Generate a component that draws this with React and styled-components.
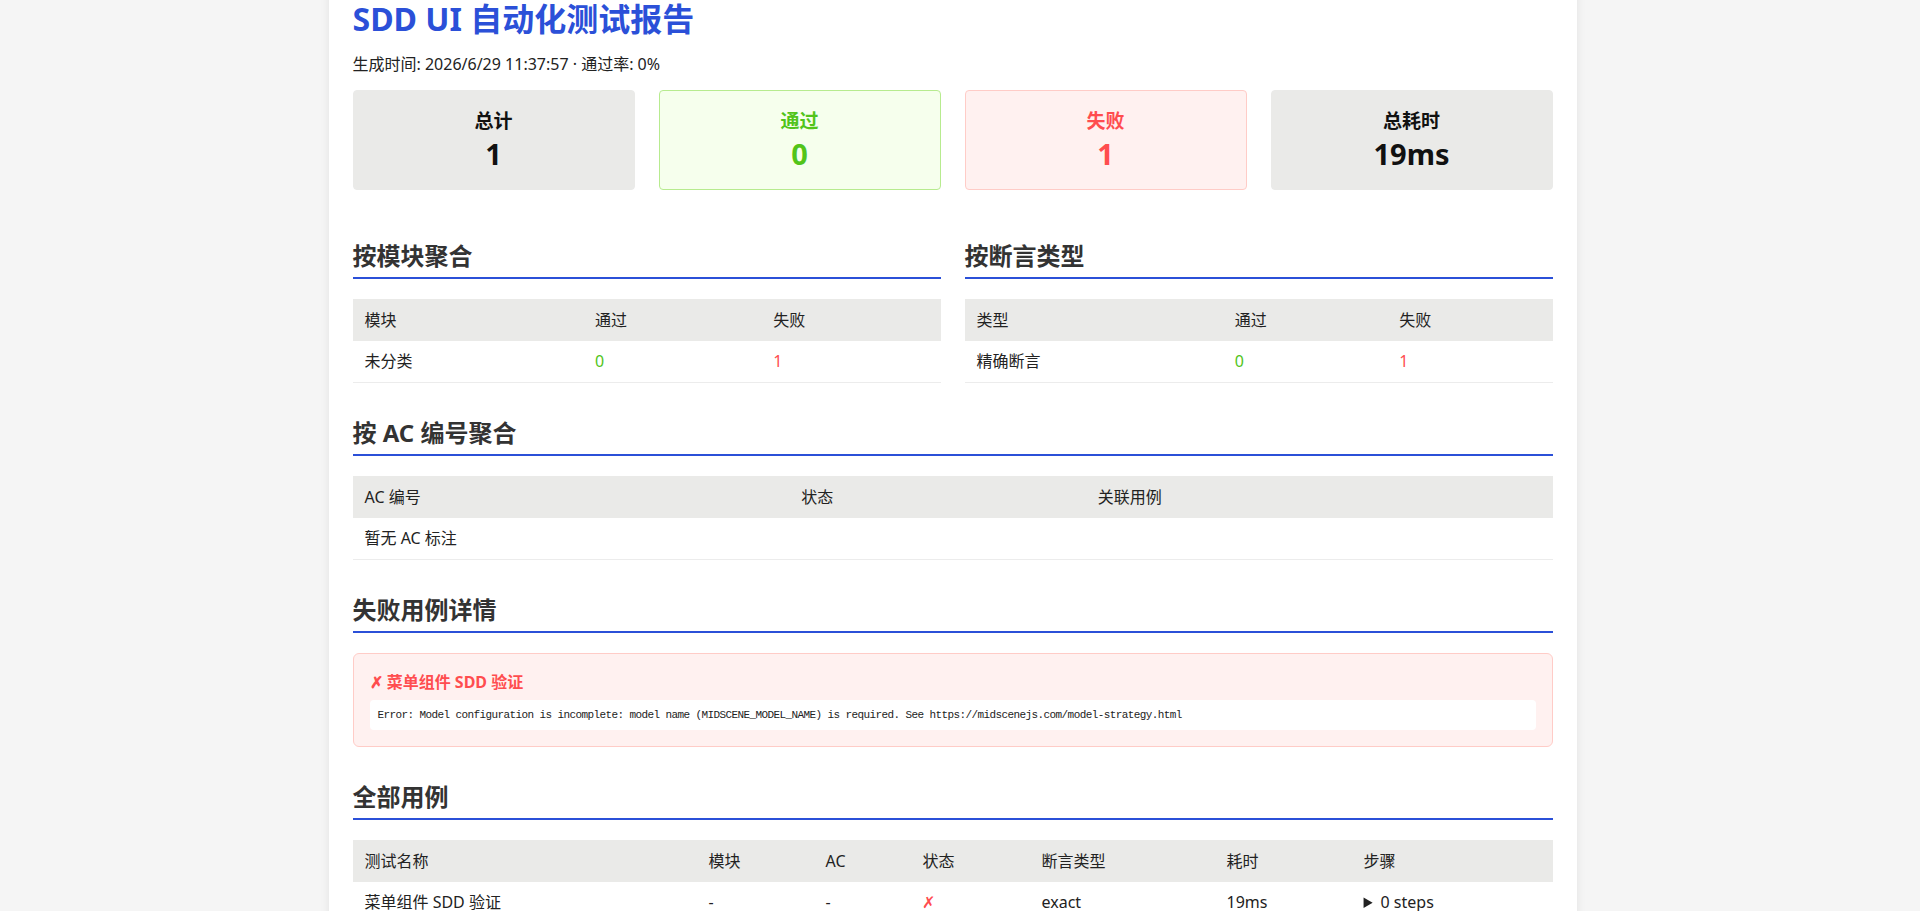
import React, { useEffect } from 'react'
import styled, { createGlobalStyle } from 'styled-components'

const GlobalStyle = createGlobalStyle`
  html {
    background: #f5f5f5;
  }
  body {
    margin: 0;
    padding: 24px 39px 24px 24px;
    background: #f5f5f5;
    color: #333;
    font-family: "Noto Sans", "Noto Sans CJK SC", sans-serif;
    font-size: 16px;
  }
  ::-webkit-scrollbar {
    width: 15px;
    background: #2b2b2b;
  }
  ::-webkit-scrollbar-thumb {
    background: #a3a3a3;
    border: 3px solid #2b2b2b;
    border-radius: 8px;
  }
`

const blue = '#2b50d8'

const tones = {
  neutral: { bg: '#eaeae8', border: '#eaeae8', color: '#111' },
  pass: { bg: '#f6ffed', border: '#b7eb8f', color: '#52c41a' },
  fail: { bg: '#fff1f0', border: '#ffccc7', color: '#ff4d4f' },
}

const Report = styled.div`
  max-width: 1248px;
  box-sizing: border-box;
  margin: 0 auto;
  padding: 24px;
  background: #fff;
  border-radius: 8px;
  box-shadow: 0 2px 10px rgba(0, 0, 0, 0.08);
`

const Title = styled.h1`
  margin: 32px 0 15px;
  font-size: 32px;
  line-height: 38px;
  font-weight: 700;
  color: ${blue};
`

const Meta = styled.p`
  margin: 0 0 15px;
  font-size: 16px;
  line-height: 22px;
  color: #222;
`

const StatGrid = styled.div`
  display: grid;
  grid-template-columns: repeat(4, 1fr);
  gap: 24px;
`

const StatCard = styled.div`
  padding: 16px;
  border: 1px solid ${p => tones[p.$tone].border};
  border-radius: 4px;
  background: ${p => tones[p.$tone].bg};
  color: ${p => tones[p.$tone].color};
  text-align: center;
`

const StatLabel = styled.div`
  font-size: 19px;
  line-height: 28px;
  font-weight: 700;
`

const StatValue = styled.div`
  font-size: 29px;
  line-height: 38px;
  font-weight: 700;
`

const TwoCol = styled.div`
  display: grid;
  grid-template-columns: 1fr 1fr;
  gap: 24px;
`

const Section = styled.section`
  margin-top: ${p => (p.$first ? '52px' : '36px')};
`

const SectionTitle = styled.h2`
  margin: 0 0 20px;
  padding-bottom: 7px;
  border-bottom: 2px solid ${blue};
  font-size: 24px;
  line-height: 28px;
  font-weight: 700;
  color: #333;
`

const Table = styled.table`
  width: 100%;
  border-collapse: collapse;
  table-layout: fixed;
  font-size: 16px;
`

const Th = styled.th`
  box-sizing: border-box;
  width: ${p => p.$w || 'auto'};
  padding: 10px 12px;
  background: #eaeae8;
  text-align: left;
  font-weight: 400;
  line-height: 22px;
  color: #222;
`

const tdColors = { pass: '#52c41a', fail: '#ff4d4f' }

const Td = styled.td`
  padding: 9px 12px 10px;
  border-bottom: 1px solid #ececec;
  line-height: 22px;
  white-space: nowrap;
  color: ${p => tdColors[p.$tone] || '#222'};
`

const FailCard = styled.div`
  padding: 16px;
  border: 1px solid #ffccc7;
  border-radius: 6px;
  background: #fff1f0;
`

const FailTitle = styled.div`
  margin-bottom: 6px;
  font-size: 16px;
  line-height: 24px;
  font-weight: 700;
  color: #ff4d4f;
`

const ErrorBox = styled.pre`
  margin: 0;
  padding: 8px;
  border-radius: 4px;
  background: #fff;
  font-family: "Liberation Mono", "DejaVu Sans Mono", monospace;
  font-size: 11px;
  letter-spacing: -0.6px;
  line-height: 14px;
  color: #222;
  white-space: pre-wrap;
`

const Steps = styled.details`
  summary {
    cursor: pointer;
  }
`

const cases = [
  {
    name: '菜单组件 SDD 验证',
    module: '-',
    ac: '-',
    duration: '19ms',
    assertion: 'exact',
    error:
      'Error: Model configuration is incomplete: model name (MIDSCENE_MODEL_NAME) is required. See https://midscenejs.com/model-strategy.html',
  },
]

export default function App() {
  useEffect(() => {
    window.scrollTo(0, 80)
  }, [])

  return (
    <>
      <GlobalStyle />
      <Report>
        <Title>SDD UI 自动化测试报告</Title>
        <Meta>生成时间: 2026/6/29 11:37:57 · 通过率: 0%</Meta>

        <StatGrid>
          <StatCard $tone="neutral">
            <StatLabel>总计</StatLabel>
            <StatValue>1</StatValue>
          </StatCard>
          <StatCard $tone="pass">
            <StatLabel>通过</StatLabel>
            <StatValue>0</StatValue>
          </StatCard>
          <StatCard $tone="fail">
            <StatLabel>失败</StatLabel>
            <StatValue>1</StatValue>
          </StatCard>
          <StatCard $tone="neutral">
            <StatLabel>总耗时</StatLabel>
            <StatValue>19ms</StatValue>
          </StatCard>
        </StatGrid>

        <TwoCol>
          <Section $first>
            <SectionTitle>按模块聚合</SectionTitle>
            <Table>
              <thead>
                <tr>
                  <Th $w="39.2%">模块</Th>
                  <Th $w="30.3%">通过</Th>
                  <Th>失败</Th>
                </tr>
              </thead>
              <tbody>
                <tr>
                  <Td>未分类</Td>
                  <Td $tone="pass">0</Td>
                  <Td $tone="fail">1</Td>
                </tr>
              </tbody>
            </Table>
          </Section>
          <Section $first>
            <SectionTitle>按断言类型</SectionTitle>
            <Table>
              <thead>
                <tr>
                  <Th $w="43.9%">类型</Th>
                  <Th $w="28%">通过</Th>
                  <Th>失败</Th>
                </tr>
              </thead>
              <tbody>
                <tr>
                  <Td>精确断言</Td>
                  <Td $tone="pass">0</Td>
                  <Td $tone="fail">1</Td>
                </tr>
              </tbody>
            </Table>
          </Section>
        </TwoCol>

        <Section>
          <SectionTitle>按 AC 编号聚合</SectionTitle>
          <Table>
            <thead>
              <tr>
                <Th $w="36.4%">AC 编号</Th>
                <Th $w="24.7%">状态</Th>
                <Th>关联用例</Th>
              </tr>
            </thead>
            <tbody>
              <tr>
                <Td colSpan={3}>暂无 AC 标注</Td>
              </tr>
            </tbody>
          </Table>
        </Section>

        <Section>
          <SectionTitle>失败用例详情</SectionTitle>
          {cases.map(c => (
            <FailCard key={c.name}>
              <FailTitle>✗ {c.name}</FailTitle>
              <ErrorBox>{c.error}</ErrorBox>
            </FailCard>
          ))}
        </Section>

        <Section>
          <SectionTitle>全部用例</SectionTitle>
          <Table>
            <thead>
              <tr>
                <Th $w="28.67%">测试名称</Th>
                <Th $w="9.75%">模块</Th>
                <Th $w="8.08%">AC</Th>
                <Th $w="9.92%">状态</Th>
                <Th $w="15.42%">断言类型</Th>
                <Th $w="11.42%">耗时</Th>
                <Th>步骤</Th>
              </tr>
            </thead>
            <tbody>
              {cases.map(c => (
                <tr key={c.name}>
                  <Td>{c.name}</Td>
                  <Td>{c.module}</Td>
                  <Td>{c.ac}</Td>
                  <Td $tone="fail">✗</Td>
                  <Td>{c.assertion}</Td>
                  <Td>{c.duration}</Td>
                  <Td>
                    <Steps>
                      <summary>0 steps</summary>
                    </Steps>
                  </Td>
                </tr>
              ))}
            </tbody>
          </Table>
        </Section>
      </Report>
    </>
  )
}
